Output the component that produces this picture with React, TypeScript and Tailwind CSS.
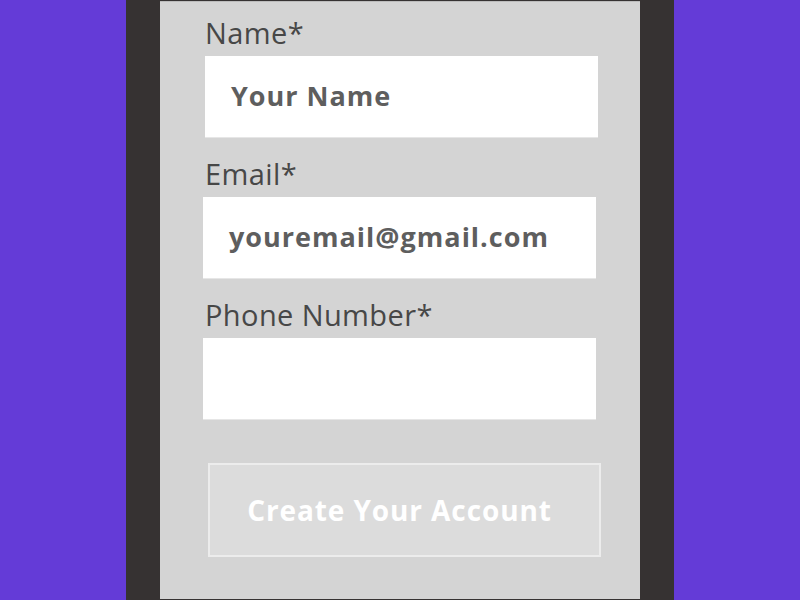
export default function App() {
  return (
    <div className="flex h-[600px] w-full justify-center overflow-hidden bg-[#643bd7]">
      <div className="flex h-full w-[548px] justify-center bg-[#363232]">
        <div className="mt-px flex h-[598px] w-[480px] flex-col border-t border-[#bcbcbc] bg-[#d4d4d4] pl-[43px] pr-[44px] pt-[15px] font-['Open_Sans',sans-serif]">
          <Field label="Name*" value="Your Name" className="ml-[2px]" />
          <Field label="Email*" value="youremail@gmail.com" />
          <Field label="Phone Number*" value="" />
          <button className="ml-[5px] mt-[23px] h-[94px] w-[393px] border-2 border-[#ececec] bg-[#dcdcdc] pr-[10px] text-[28px] font-bold tracking-[0.9px] text-white">
            Create Your Account
          </button>
        </div>
      </div>
    </div>
  );
}

function Field({ label, value, className = "" }: { label: string; value: string; className?: string }) {
  return (
    <div className="mb-[20px] flex flex-col">
      <span className="pl-[2px] text-[29px] leading-[32px] tracking-[0.4px] text-[#474747]">{label}</span>
      <div
        className={`mt-[7px] flex h-[82px] w-[393px] items-center border-b border-[#e6e6e6] bg-white pl-[26px] text-[27px] font-bold tracking-[1px] text-[#5e5e5e] ${className}`}
      >
        {value}
      </div>
    </div>
  );
}
